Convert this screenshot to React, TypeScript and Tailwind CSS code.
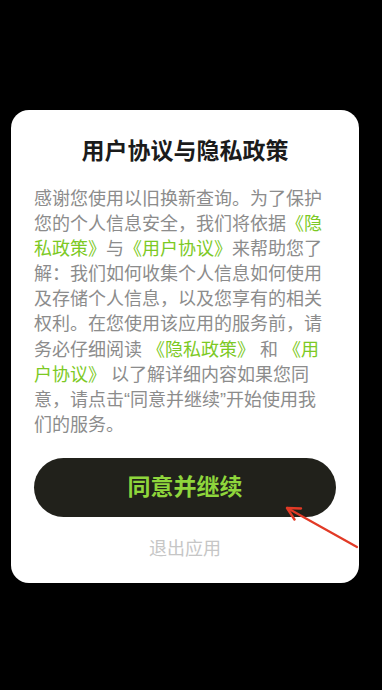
import React from 'react';

const font = { fontFamily: '"Liberation Sans", "Noto Sans CJK SC", sans-serif' };

const Link: React.FC<{ children: React.ReactNode }> = ({ children }) => (
  <span className="text-[#7cc924]">{children}</span>
);

export default function App() {
  return (
    <div className="relative h-[690px] w-full bg-black" style={font}>
      <div className="flex flex-col pt-[110px]">
        <div className="ml-[11px] w-[348px] rounded-[18px] bg-white px-[23px] pb-[19px] pt-[26px]">
          <h1 className="text-center text-[23px] font-bold leading-[30px] text-[#1b1b1b]">用户协议与隐私政策</h1>
          <p className="mt-[21px] pr-[8px] text-[18px] leading-[25.1px] text-[#8c8c8c]">
            感谢您使用以旧换新查询。为了保护您的个人信息安全，我们将依据<Link>《隐私政策》</Link>与<Link>《用户协议》</Link>来帮助您了解：我们如何收集个人信息如何使用及存储个人信息，以及您享有的相关权利。在您使用该应用的服务前，请务必仔细阅读 <Link>《隐私政策》</Link> 和 <Link>《用户协议》</Link> 以了解详细内容如果您同意，请点击“同意并继续”开始使用我们的服务。
          </p>
          <button className="mt-[20px] flex h-[59px] w-full items-center justify-center rounded-full bg-[#21211b] text-[23px] font-bold text-[#8fd63c]">
            同意并继续
          </button>
          <div className="mt-[17px] text-center text-[18px] leading-[30px] text-[#c6c6c6]">退出应用</div>
        </div>
      </div>
      <svg className="absolute left-0 top-0" width="382" height="690" viewBox="0 0 382 690">
        <line x1="357" y1="547" x2="289" y2="509" stroke="#e23a26" strokeWidth="2.2" strokeLinecap="round" />
        <path d="M287 508 L301 508.5 M287 508 L294.5 519.5" stroke="#e23a26" strokeWidth="2.4" strokeLinecap="round" fill="none" />
      </svg>
    </div>
  );
}
